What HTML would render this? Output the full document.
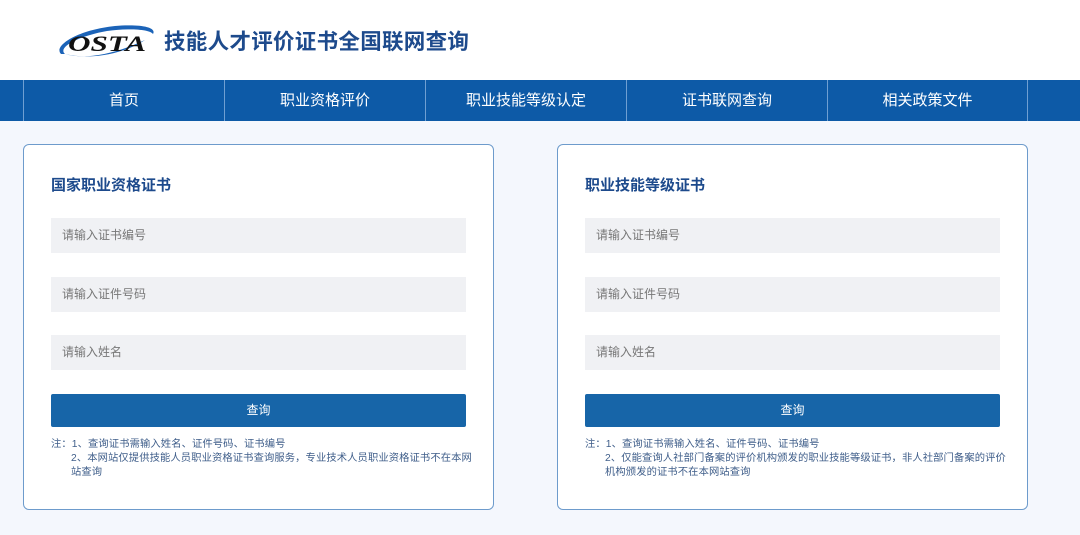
<!DOCTYPE html><html><head><meta charset="utf-8"><style>
*{margin:0;padding:0;box-sizing:border-box}
body{width:1080px;height:535px;overflow:hidden;background:#f4f7fd;font-family:"Liberation Sans","Noto Sans CJK SC",sans-serif;position:relative}
.hdr{height:80px;background:#fff;position:relative}
.title{position:absolute;left:164px;top:25px;font-size:21.5px;font-weight:bold;color:#1d4a8c;letter-spacing:0.3px}
.nav{position:absolute;top:80px;left:0;width:1080px;height:41px;background:#0d5aa7}
.nav div{position:absolute;top:0;height:41px;line-height:41px;text-align:center;color:#fff;font-size:15px;border-left:1px solid #6f9fd2}
.card{position:absolute;top:144px;width:471px;height:366px;background:#fff;border:1px solid #6d9bcc;border-radius:6px}
.card h3{position:absolute;left:27px;top:29px;font-size:15px;color:#1d4a8c}
.inp{position:absolute;left:27px;width:415px;height:35px;background:#f0f1f4;font-size:12px;color:#777;line-height:35px;padding-left:11px}
.btn{position:absolute;left:27px;top:249px;width:415px;height:33px;background:#1765a8;color:#fff;font-size:12px;text-align:center;line-height:33px;border-radius:2px}
.note{position:absolute;left:27px;top:293px;width:422px;font-size:10.3px;color:#3f5e8a;line-height:14px;letter-spacing:0.1px}
.note p{padding-left:20px}
</style></head><body>
<div class="hdr">
<svg style="position:absolute;left:55px;top:20px" width="105" height="40" viewBox="0 0 105 40">
<path d="M6 34 C-2 26 22 10 60 6 C85 4 102 7 98 14 C95 9 72 8 52 11 C24 16 2 27 10 34 Z" fill="#1b63b8"/>
<path d="M10 34 C30 40 60 34 90 20 C72 32 40 41 10 34Z" fill="#1b63b8"/>
<text x="13" y="31" font-family="Liberation Serif" font-style="italic" font-weight="bold" font-size="22" fill="#111" textLength="78" lengthAdjust="spacingAndGlyphs">OSTA</text>
</svg>
<div class="title">技能人才评价证书全国联网查询</div>
</div>
<div class="nav">
<div style="left:23px;width:201px">首页</div>
<div style="left:224px;width:201px">职业资格评价</div>
<div style="left:425px;width:201px">职业技能等级认定</div>
<div style="left:626px;width:201px">证书联网查询</div>
<div style="left:827px;width:201px;border-right:1px solid #6f9fd2">相关政策文件</div>
</div>
<div class="card" style="left:23px">
<h3>国家职业资格证书</h3>
<div class="inp" style="top:73px">请输入证书编号</div>
<div class="inp" style="top:132px">请输入证件号码</div>
<div class="inp" style="top:190px">请输入姓名</div>
<div class="btn">查询</div>
<div class="note">注：1、查询证书需输入姓名、证件号码、证书编号<p>2、本网站仅提供技能人员职业资格证书查询服务，专业技术人员职业资格证书不在本网站查询</p></div>
</div>
<div class="card" style="left:557px">
<h3>职业技能等级证书</h3>
<div class="inp" style="top:73px">请输入证书编号</div>
<div class="inp" style="top:132px">请输入证件号码</div>
<div class="inp" style="top:190px">请输入姓名</div>
<div class="btn">查询</div>
<div class="note">注：1、查询证书需输入姓名、证件号码、证书编号<p>2、仅能查询人社部门备案的评价机构颁发的职业技能等级证书，非人社部门备案的评价机构颁发的证书不在本网站查询</p></div>
</div>
</body></html>
